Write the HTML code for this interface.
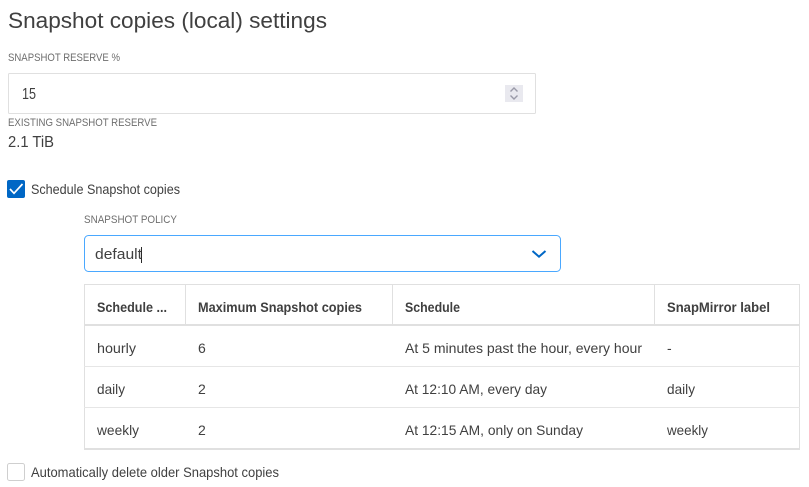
<!DOCTYPE html>
<html>
<head>
<meta charset="utf-8">
<title>Snapshot copies (local) settings</title>
<style>
html,body{margin:0;padding:0;background:#fff;}
svg{display:block;}
text{font-family:"Liberation Sans",Arial,sans-serif;fill:#404040;}
.l{font-size:11px;fill:#6e6e6e;}
.b{font-size:14px;}
.h{font-size:14px;font-weight:bold;}
</style>
</head>
<body>
<svg width="809" height="487" viewBox="0 0 809 487" xmlns="http://www.w3.org/2000/svg">
<rect width="809" height="487" fill="#fff"/>
<text x="8" y="28" font-size="22" textLength="319" lengthAdjust="spacingAndGlyphs">Snapshot copies (local) settings</text>

<text class="l" x="8" y="61" textLength="112" lengthAdjust="spacingAndGlyphs">SNAPSHOT RESERVE %</text>
<rect x="8.5" y="73.5" width="527" height="40" rx="1" fill="#fff" stroke="#e0e0e0"/>
<text x="22" y="99" font-size="15.5" textLength="14" lengthAdjust="spacingAndGlyphs">15</text>
<rect x="505" y="85" width="18" height="17" fill="#e9e9ef"/>
<path d="M510.5 91.5l3.5-3.5 3.5 3.5M510.5 95.5l3.5 3.5 3.5-3.5" fill="none" stroke="#9a9aa8" stroke-width="1.4"/>

<text class="l" x="8" y="126" textLength="149" lengthAdjust="spacingAndGlyphs">EXISTING SNAPSHOT RESERVE</text>
<text x="8" y="147" font-size="15.5" textLength="46" lengthAdjust="spacingAndGlyphs">2.1 TiB</text>

<rect x="7" y="180" width="18" height="18" rx="2" fill="#0067c5"/>
<path d="M10 189l4 4.3 8.5-9.3" fill="none" stroke="#fff" stroke-width="1.7"/>
<text class="b" x="31" y="194" textLength="149" lengthAdjust="spacingAndGlyphs">Schedule Snapshot copies</text>

<text class="l" x="84" y="223" textLength="93" lengthAdjust="spacingAndGlyphs">SNAPSHOT POLICY</text>
<rect x="84.5" y="235.5" width="476" height="36" rx="4" fill="#fff" stroke="#4aa8ff"/>
<text x="95" y="259" font-size="15" textLength="47" lengthAdjust="spacingAndGlyphs">default</text>
<rect x="141" y="247" width="1" height="16" fill="#2a2a2a"/>
<path d="M532.5 251l6.5 5.7 6.5-5.7" fill="none" stroke="#0067c5" stroke-width="2"/>

<!-- table -->
<rect x="84.5" y="284.5" width="715" height="164" fill="#fff" stroke="#e0e0e0"/>
<rect x="84" y="324" width="716" height="2" fill="#e0e0e0"/>
<rect x="84" y="366" width="716" height="1" fill="#e6e6e6"/>
<rect x="84" y="407" width="716" height="1" fill="#e6e6e6"/>
<rect x="84" y="448" width="716" height="2" fill="#e0e0e0"/>
<rect x="185" y="284" width="1" height="40" fill="#e0e0e0"/>
<rect x="392" y="284" width="1" height="40" fill="#e0e0e0"/>
<rect x="654" y="284" width="1" height="40" fill="#e0e0e0"/>

<text class="h" x="97" y="312" textLength="70" lengthAdjust="spacingAndGlyphs">Schedule ...</text>
<text class="h" x="198" y="312" textLength="164" lengthAdjust="spacingAndGlyphs">Maximum Snapshot copies</text>
<text class="h" x="405" y="312" textLength="55" lengthAdjust="spacingAndGlyphs">Schedule</text>
<text class="h" x="667" y="312" textLength="103" lengthAdjust="spacingAndGlyphs">SnapMirror label</text>

<text class="b" x="97" y="353" textLength="39" lengthAdjust="spacingAndGlyphs">hourly</text>
<text class="b" x="198" y="353" font-size="14">6</text>
<text class="b" x="405" y="353" textLength="237" lengthAdjust="spacingAndGlyphs">At 5 minutes past the hour, every hour</text>
<text class="b" x="667" y="353">-</text>

<text class="b" x="97" y="394" textLength="28" lengthAdjust="spacingAndGlyphs">daily</text>
<text class="b" x="198" y="394">2</text>
<text class="b" x="405" y="394" textLength="142" lengthAdjust="spacingAndGlyphs">At 12:10 AM, every day</text>
<text class="b" x="667" y="394" textLength="28" lengthAdjust="spacingAndGlyphs">daily</text>

<text class="b" x="97" y="435" textLength="42" lengthAdjust="spacingAndGlyphs">weekly</text>
<text class="b" x="198" y="435">2</text>
<text class="b" x="405" y="435" textLength="178" lengthAdjust="spacingAndGlyphs">At 12:15 AM, only on Sunday</text>
<text class="b" x="667" y="435" textLength="41" lengthAdjust="spacingAndGlyphs">weekly</text>

<rect x="7.5" y="463.5" width="17" height="17" rx="2" fill="#fff" stroke="#cfcfcf"/>
<text class="b" x="31" y="477" textLength="248" lengthAdjust="spacingAndGlyphs">Automatically delete older Snapshot copies</text>
</svg>
</body>
</html>
